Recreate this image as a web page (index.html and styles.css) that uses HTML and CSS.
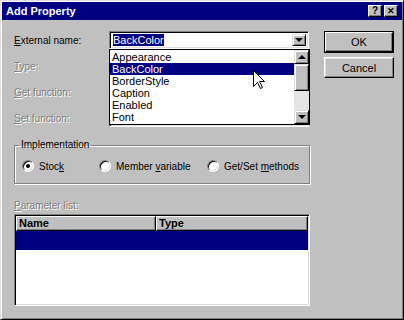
FILE: index.html
```html
<!DOCTYPE html>
<html lang="en">
<head>
    <meta charset="UTF-8">
    <title>Add Property</title>
    <link rel="stylesheet" href="styles.css">
</head>
<body>
<div class="window">
    <div class="titlebar">
        <span class="title">Add Property</span>
        <div class="caption-buttons">
            <div class="cap-btn">?</div>
            <div class="cap-btn close">✕</div>
        </div>
    </div>

    <div class="dialog-body">
        <div class="left-col">
            <div class="fields">
                <div class="field-row">
                    <label class="label"><u>E</u>xternal name:</label>
                    <div class="combo">
                        <div class="combo-text"><span class="sel-text">BackColor</span></div>
                        <div class="drop-btn"><span class="tri-down"></span></div>

                        <div class="popup">
                            <div class="popup-items">
                                <div class="item">Appearance</div>
                                <div class="item selected">BackColor</div>
                                <div class="item">BorderStyle</div>
                                <div class="item">Caption</div>
                                <div class="item">Enabled</div>
                                <div class="item">Font</div>
                            </div>
                            <div class="scrollbar">
                                <div class="sb-btn"><span class="tri-up"></span></div>
                                <div class="sb-thumb"></div>
                                <div class="sb-track"></div>
                                <div class="sb-btn"><span class="tri-down"></span></div>
                            </div>
                        </div>
                    </div>
                </div>
                <div class="field-row">
                    <label class="label disabled"><u>T</u>ype:</label>
                    <div class="textbox disabled-box"></div>
                </div>
                <div class="field-row">
                    <label class="label disabled"><u>G</u>et function:</label>
                    <div class="textbox disabled-box"></div>
                </div>
                <div class="field-row">
                    <label class="label disabled"><u>S</u>et function:</label>
                    <div class="textbox disabled-box"></div>
                </div>
            </div>

            <fieldset class="group">
                <legend>Implementation</legend>
                <div class="radios">
                    <div class="radio-item"><span class="radio checked"></span><span>Stoc<u>k</u></span></div>
                    <div class="radio-item"><span class="radio"></span><span>Member <u>v</u>ariable</span></div>
                    <div class="radio-item"><span class="radio"></span><span>Get/Set <u>m</u>ethods</span></div>
                </div>
            </fieldset>

            <div class="label disabled param-label"><u>P</u>arameter list:</div>
            <div class="listview">
                <div class="lv-header">
                    <div class="lv-col name-col">Name</div>
                    <div class="lv-col type-col">Type</div>
                </div>
                <div class="lv-row selected"></div>
            </div>
        </div>

        <div class="right-col">
            <div class="button default"><span>OK</span></div>
            <div class="button">Cancel</div>
        </div>
    </div>

    <svg class="cursor" width="13" height="20" viewBox="0 0 13 20">
        <path d="M0.5 0.5 L0.5 16.5 L4.5 12.5 L7.5 18.5 L9.5 17.5 L6.5 11.5 L11.5 11.5 Z" fill="#fff" stroke="#000" stroke-width="1"/>
    </svg>
</div>
</body>
</html>
```

FILE: styles.css
```css
body {
    margin: 0;
    font-family: 'Liberation Sans', Arial, sans-serif;
    font-size: 10px;
    background: #c0c0c0;
}

.window {
    position: relative;
    width: 404px;
    height: 320px;
    box-sizing: border-box;
    background: #c0c0c0;
    border: 1px solid;
    border-color: #dfdfdf #000 #000 #dfdfdf;
    box-shadow: inset 1px 1px #fff, inset -1px -1px #808080;
    padding: 1px;
}

.titlebar {
    height: 18px;
    background: #000080;
    color: #fff;
    display: flex;
    align-items: center;
    justify-content: space-between;
    padding: 0 4px 0 4px;
}

.title {
    font-weight: bold;
    font-size: 11px;
}

.caption-buttons {
    display: flex;
    gap: 2px;
}

.cap-btn {
    width: 14px;
    height: 12px;
    box-sizing: border-box;
    background: #c0c0c0;
    border: 1px solid;
    border-color: #fff #000 #000 #fff;
    box-shadow: inset -1px -1px #808080;
    color: #000;
    font-weight: bold;
    font-size: 10px;
    line-height: 10px;
    text-align: center;
}

.cap-btn.close {
    font-size: 9px;
}

.dialog-body {
    display: flex;
    padding: 11px 0 0 12px;
}

.left-col {
    width: 296px;
}

.fields {
    display: flex;
    flex-direction: column;
    gap: 8px;
}

.field-row {
    display: flex;
    align-items: center;
    height: 18px;
}

.label {
    width: 95px;
    color: #000;
}

.label.disabled {
    color: #808080;
    text-shadow: 1px 1px #fff;
}

.combo, .textbox {
    position: relative;
    width: 200px;
    height: 18px;
    box-sizing: border-box;
    border: 1px solid;
    border-color: #808080 #fff #fff #808080;
    box-shadow: inset 1px 1px #000, inset -1px -1px #dfdfdf;
    background: #fff;
}

.disabled-box {
    background: #c0c0c0;
}

.combo-text {
    padding: 3px 0 0 3px;
    line-height: 11px;
    font-size: 11px;
}

.sel-text {
    background: #000080;
    color: #fff;
}

.drop-btn {
    position: absolute;
    top: 2px;
    right: 2px;
    width: 14px;
    height: 12px;
    box-sizing: border-box;
    background: #c0c0c0;
    border: 1px solid;
    border-color: #dfdfdf #000 #000 #dfdfdf;
    box-shadow: inset 1px 1px #fff, inset -1px -1px #808080;
    display: flex;
    align-items: center;
    justify-content: center;
}

.tri-down {
    width: 0;
    height: 0;
    border-left: 4px solid transparent;
    border-right: 4px solid transparent;
    border-top: 4px solid #000;
}

.tri-up {
    width: 0;
    height: 0;
    border-left: 4px solid transparent;
    border-right: 4px solid transparent;
    border-bottom: 4px solid #000;
}

/* open drop-down list */
.popup {
    position: absolute;
    top: 17px;
    left: -1px;
    width: 201px;
    height: 76px;
    box-sizing: border-box;
    border: 1px solid #000;
    background: #fff;
    display: flex;
    z-index: 2;
}

.popup-items {
    flex: 1;
    padding-top: 1px;
}

.item {
    height: 12px;
    line-height: 12px;
    padding-left: 2px;
    font-size: 11px;
}

.item.selected {
    background: #000080;
    color: #fff;
}

.scrollbar {
    width: 15px;
    display: flex;
    flex-direction: column;
}

.sb-btn {
    height: 14px;
    box-sizing: border-box;
    background: #c0c0c0;
    border: 1px solid;
    border-color: #dfdfdf #000 #000 #dfdfdf;
    box-shadow: inset 1px 1px #fff, inset -1px -1px #808080;
    display: flex;
    align-items: center;
    justify-content: center;
}

.sb-thumb {
    height: 27px;
    box-sizing: border-box;
    background: #c0c0c0;
    border: 1px solid;
    border-color: #dfdfdf #000 #000 #dfdfdf;
    box-shadow: inset 1px 1px #fff, inset -1px -1px #808080;
}

.sb-track {
    flex: 1;
    background: #e4e4e4;
}

.group {
    margin: 12px 0 0 0;
    padding: 9px 6px 0 4px;
    border: 1px solid #808080;
    box-shadow: 1px 1px 0 #fff, inset 1px 1px 0 #fff;
    height: 45px;
    box-sizing: border-box;
}

.group legend {
    padding: 0 2px;
    margin-left: 0;
    line-height: 12px;
}

.radios {
    display: flex;
    padding-left: 3px;
}

.radio-item {
    display: flex;
    align-items: center;
    gap: 5px;
}

.radio-item:nth-child(1) { width: 77px; }
.radio-item:nth-child(2) { width: 108px; }

.radio {
    width: 12px;
    height: 12px;
    box-sizing: border-box;
    border-radius: 50%;
    border: 1px solid;
    border-color: #808080 #fff #fff #808080;
    box-shadow: inset 1px 1px #000, inset -1px -1px #dfdfdf;
    background: #fff;
    position: relative;
}

.radio.checked::after {
    content: '';
    position: absolute;
    left: 3px;
    top: 3px;
    width: 4px;
    height: 4px;
    border-radius: 50%;
    background: #000;
}

.param-label {
    margin-top: 16px;
    line-height: 12px;
}

.listview {
    margin-top: 2px;
    height: 92px;
    box-sizing: border-box;
    border: 1px solid;
    border-color: #808080 #fff #fff #808080;
    box-shadow: inset 1px 1px #000, inset -1px -1px #dfdfdf;
    background: #fff;
    padding: 1px 1px 0 1px;
}

.lv-header {
    display: flex;
    height: 15px;
}

.lv-col {
    box-sizing: border-box;
    background: #c0c0c0;
    border: 1px solid;
    border-color: #fff #000 #000 #fff;
    box-shadow: inset -1px -1px #808080;
    font-weight: bold;
    font-size: 11px;
    line-height: 13px;
    padding-left: 2px;
}

.name-col { width: 140px; }
.type-col { flex: 1; }

.lv-row {
    height: 19px;
}

.lv-row.selected {
    background: #000080;
}

.right-col {
    margin-left: 14px;
    width: 70px;
    display: flex;
    flex-direction: column;
    gap: 4px;
    padding-top: 0;
}

.button {
    height: 21px;
    box-sizing: border-box;
    background: #c0c0c0;
    border: 1px solid;
    border-color: #fff #000 #000 #fff;
    box-shadow: inset -1px -1px #808080, inset 1px 1px #dfdfdf;
    display: flex;
    align-items: center;
    justify-content: center;
    font-size: 11px;
}

.button.default {
    height: 22px;
    border: 1px solid #000;
    box-shadow: none;
    padding: 0;
}

.button.default span {
    flex: 1;
    align-self: stretch;
    display: flex;
    align-items: center;
    justify-content: center;
    border: 1px solid;
    border-color: #fff #000 #000 #fff;
    box-shadow: inset -1px -1px #808080;
}

.cursor {
    position: absolute;
    left: 252px;
    top: 69px;
    z-index: 5;
}
```
